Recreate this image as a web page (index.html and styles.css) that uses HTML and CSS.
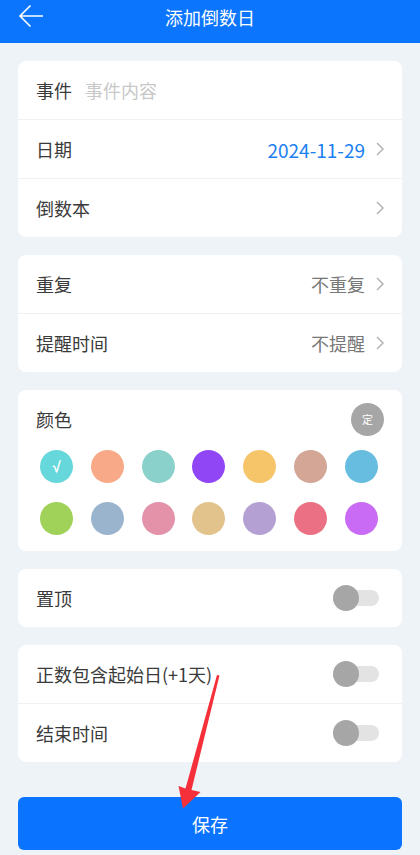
FILE: index.html
```html
<!DOCTYPE html>
<html lang="zh-CN">
<head>
    <meta charset="UTF-8">
    <meta name="viewport" content="width=device-width, initial-scale=1.0">
    <title>添加倒数日</title>
    <link rel="stylesheet" href="styles.css">
</head>
<body>
    <header class="topbar">
        <svg class="back" width="26" height="24" viewBox="0 0 26 24">
            <path d="M25 12H2M12.5 1.5L2 12l10.5 10.5" fill="none" stroke="#fff" stroke-width="1.6"/>
        </svg>
        <h1>添加倒数日</h1>
    </header>

    <main class="page">
        <section class="card">
            <div class="row">
                <span class="label">事件</span>
                <span class="placeholder">事件内容</span>
            </div>
            <div class="row">
                <span class="label">日期</span>
                <span class="value date">2024-11-29</span>
                <svg class="chev" width="10" height="16" viewBox="0 0 10 16"><path d="M2 2l6 6-6 6" fill="none" stroke="#b4b4b4" stroke-width="1.5"/></svg>
            </div>
            <div class="row">
                <span class="label">倒数本</span>
                <span class="value"></span>
                <svg class="chev" width="10" height="16" viewBox="0 0 10 16"><path d="M2 2l6 6-6 6" fill="none" stroke="#b4b4b4" stroke-width="1.5"/></svg>
            </div>
        </section>

        <section class="card">
            <div class="row">
                <span class="label">重复</span>
                <span class="value">不重复</span>
                <svg class="chev" width="10" height="16" viewBox="0 0 10 16"><path d="M2 2l6 6-6 6" fill="none" stroke="#b4b4b4" stroke-width="1.5"/></svg>
            </div>
            <div class="row">
                <span class="label">提醒时间</span>
                <span class="value">不提醒</span>
                <svg class="chev" width="10" height="16" viewBox="0 0 10 16"><path d="M2 2l6 6-6 6" fill="none" stroke="#b4b4b4" stroke-width="1.5"/></svg>
            </div>
        </section>

        <section class="card colors">
            <div class="colors-head">
                <span class="label">颜色</span>
                <span class="custom">定</span>
            </div>
            <div class="swatches">
                <span class="dot selected" style="background:#66d7da">√</span>
                <span class="dot" style="background:#f8aa88"></span>
                <span class="dot" style="background:#8bd1cb"></span>
                <span class="dot" style="background:#9146f5"></span>
                <span class="dot" style="background:#f6c56a"></span>
                <span class="dot" style="background:#d3a695"></span>
                <span class="dot" style="background:#67bddf"></span>
                <span class="dot" style="background:#a0d158"></span>
                <span class="dot" style="background:#9bb4ce"></span>
                <span class="dot" style="background:#e492aa"></span>
                <span class="dot" style="background:#e1c38b"></span>
                <span class="dot" style="background:#b4a0d3"></span>
                <span class="dot" style="background:#ec7083"></span>
                <span class="dot" style="background:#c96bf5"></span>
            </div>
        </section>

        <section class="card">
            <div class="row">
                <span class="label">置顶</span>
                <span class="toggle"></span>
            </div>
        </section>

        <section class="card">
            <div class="row">
                <span class="label">正数包含起始日(+1天)</span>
                <span class="toggle"></span>
            </div>
            <div class="row">
                <span class="label">结束时间</span>
                <span class="toggle"></span>
            </div>
        </section>

        <button class="save">保存</button>
    </main>

    <!-- red annotation arrow drawn over the screenshot -->
    <svg class="annotation" width="420" height="855" viewBox="0 0 420 855">
        <polygon points="217,675 219.5,675.5 191.5,790 200.5,792 183,808.5 178.5,786 185.5,788.5" fill="#f5303a"/>
    </svg>
</body>
</html>
```

FILE: styles.css
```css
* {
    box-sizing: border-box;
}
body {
    margin: 0;
    width: 420px;
    height: 855px;
    overflow: hidden;
    position: relative;
    background: #eef3f8;
    font-family: "Noto Sans CJK SC", "Noto Sans", sans-serif;
    color: #333;
}
.topbar {
    height: 43px;
    background: #0b75fe;
    display: flex;
    align-items: flex-start;
    justify-content: center;
    position: relative;
}
.topbar h1 {
    margin: 0;
    padding-top: 5px;
    font-size: 18px;
    line-height: 24px;
    font-weight: normal;
    color: #fff;
}
.back {
    position: absolute;
    left: 18px;
    top: 4px;
}
.page {
    padding: 18px 18px 0;
    display: flex;
    flex-direction: column;
    gap: 18px;
}
.card {
    background: #fff;
    border-radius: 8px;
}
.row {
    height: 58px;
    display: flex;
    align-items: center;
    padding: 0 17px 0 18px;
    font-size: 18px;
}
.row + .row {
    border-top: 1px solid #f1f1f1;
    height: 59px;
}
.label {
    color: #3a3a3a;
    font-size: 18px;
}
.placeholder {
    margin-left: 13px;
    color: #c8c8c8;
}
.value {
    margin-left: auto;
    color: #777;
}
.date {
    color: #1a80f2;
    font-size: 19px;
}
.chev {
    margin-left: 10px;
}
.colors {
    padding: 12px 18px 16px;
}
.colors-head {
    height: 34px;
    display: flex;
    align-items: center;
    justify-content: space-between;
}
.custom {
    width: 33px;
    height: 33px;
    border-radius: 50%;
    background: #a6a6a6;
    color: #fff;
    font-size: 11px;
    display: flex;
    align-items: center;
    justify-content: center;
}
.swatches {
    margin: 14px 6px 0 4px;
    display: grid;
    grid-template-columns: repeat(7, 33px);
    justify-content: space-between;
    row-gap: 19px;
}
.dot {
    width: 33px;
    height: 33px;
    border-radius: 50%;
    color: #fff;
    font-family: "Liberation Sans", sans-serif;
    font-size: 15px;
    font-weight: bold;
    display: flex;
    align-items: center;
    justify-content: center;
}
.toggle {
    margin-left: auto;
    margin-right: 6px;
    width: 46px;
    height: 16px;
    border-radius: 8px;
    background: #e3e3e3;
    position: relative;
}
.toggle::before {
    content: "";
    position: absolute;
    left: 0;
    top: -5px;
    width: 26px;
    height: 26px;
    border-radius: 50%;
    background: #a6a6a6;
}
.save {
    margin-top: 17px;
    height: 53px;
    border: none;
    border-radius: 6px;
    background: #0a73ff;
    color: #fff;
    font-family: inherit;
    font-size: 18px;
}
.annotation {
    position: absolute;
    left: 0;
    top: 0;
    pointer-events: none;
}
```
